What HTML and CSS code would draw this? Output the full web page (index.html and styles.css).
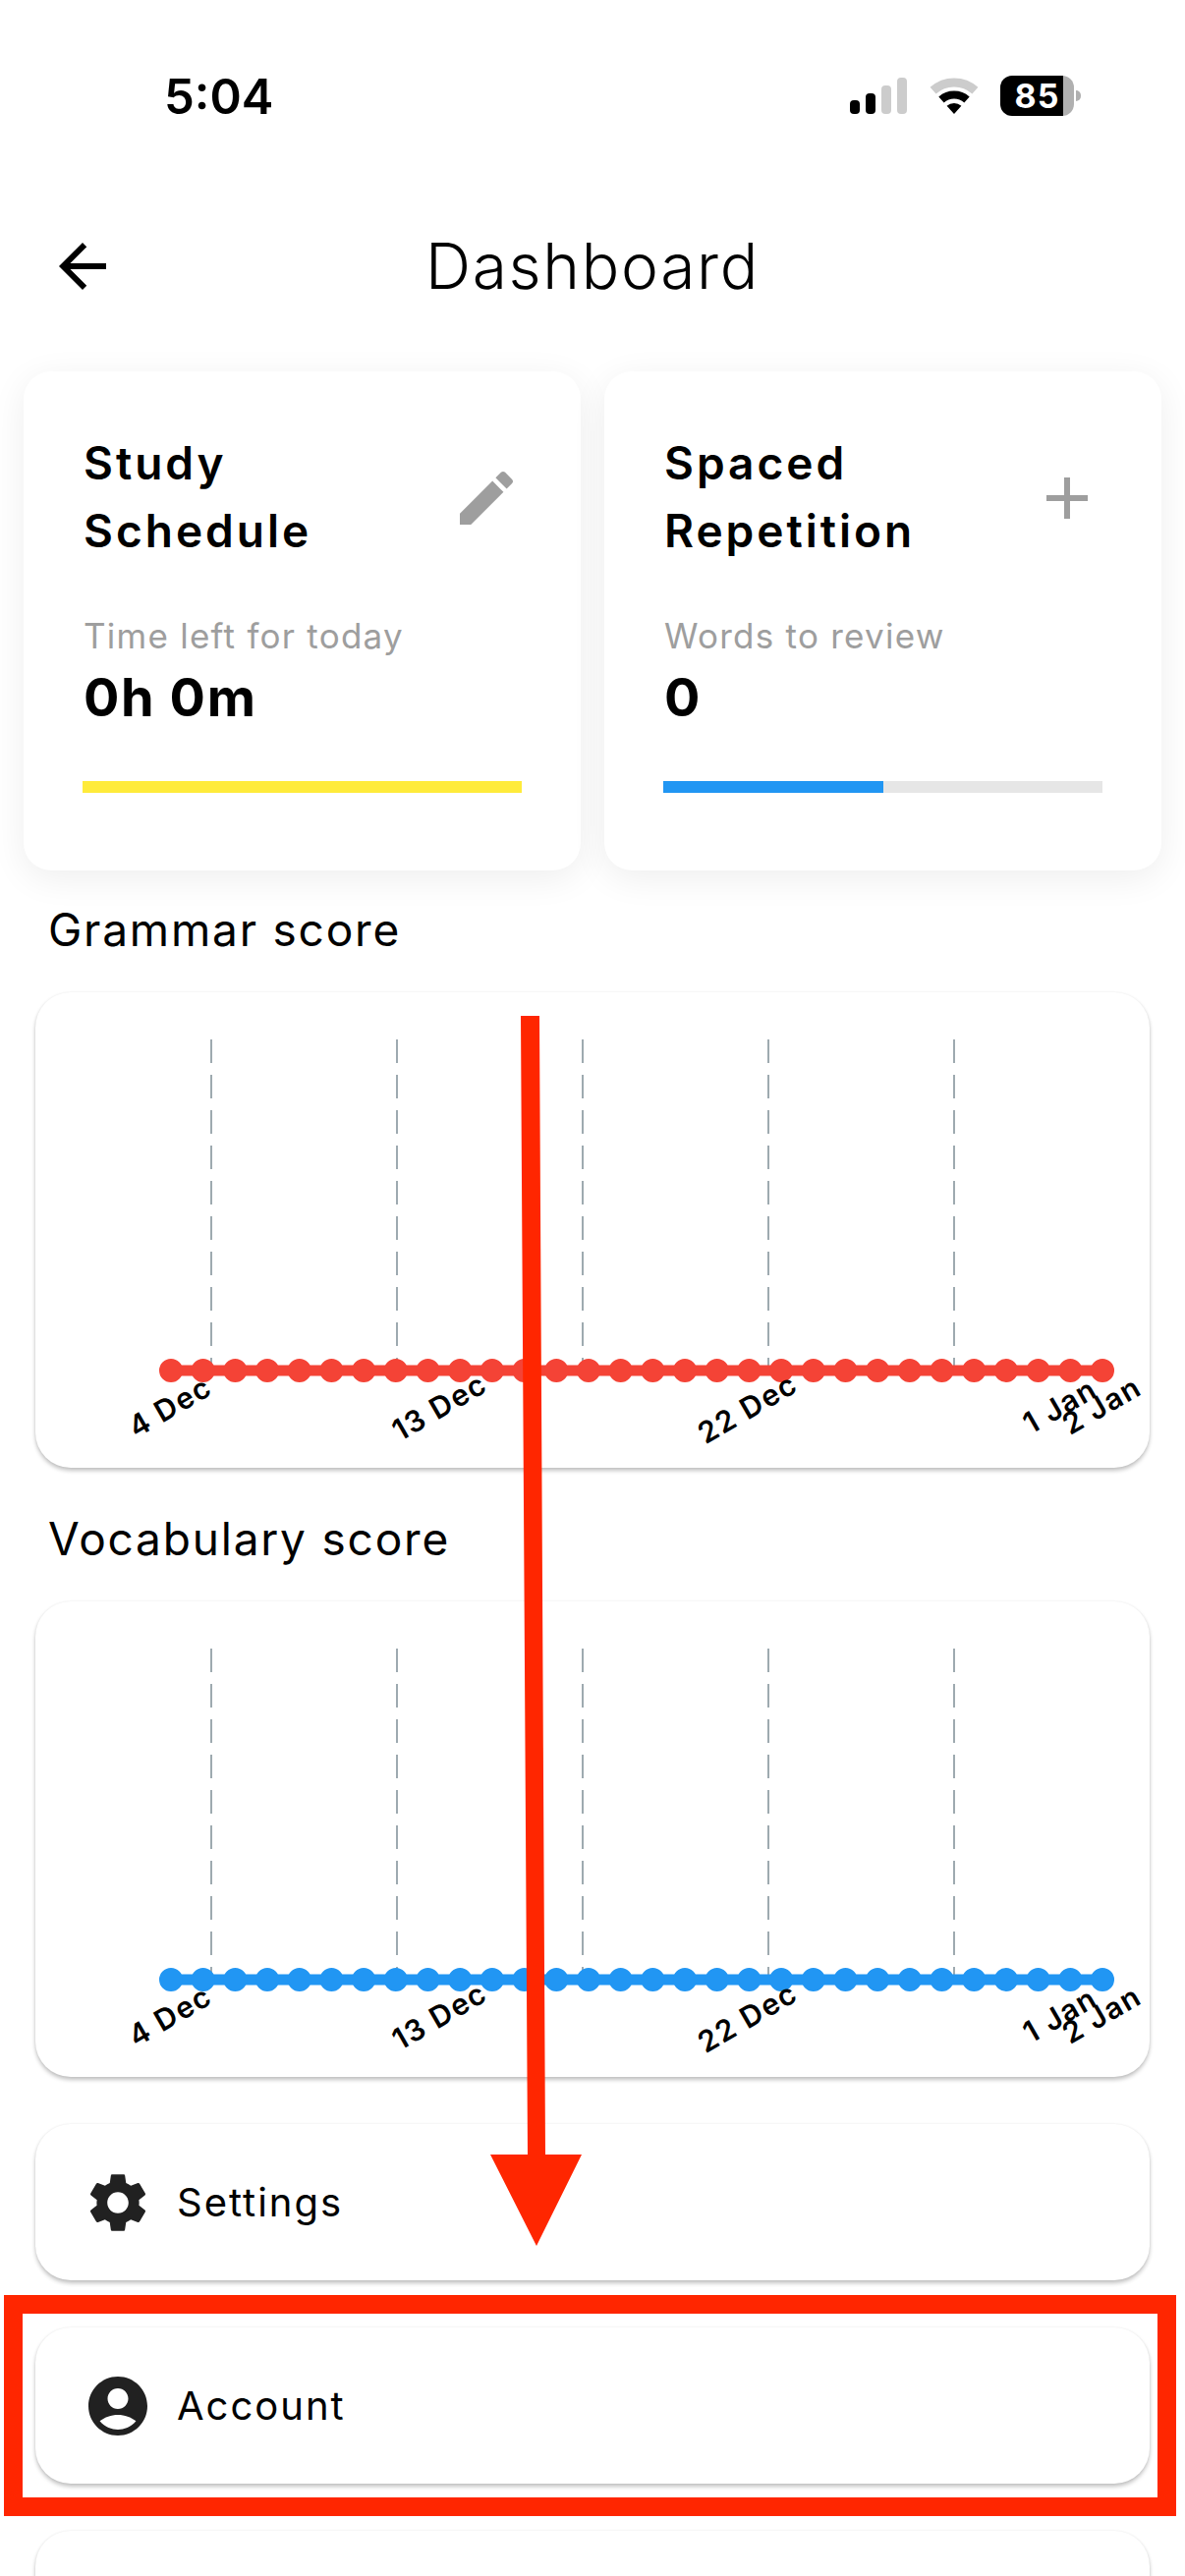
FILE: index.html
```html
<!DOCTYPE html>
<html>
    <head>
        <meta charset="utf-8"/>
        <title>Dashboard</title>
        <link rel="stylesheet" href="styles.css">
    </head>

    <body>
        <div class="status">
            <span class="clock">5:04</span>
            <svg class="signal" width="58" height="37" viewBox="0 0 58 37">
                <rect x="0" y="23" width="10" height="14" rx="4" fill="#000"/>
                <rect x="16" y="16" width="10" height="21" rx="4" fill="#000"/>
                <rect x="32" y="8" width="10" height="29" rx="4" fill="#ccc"/>
                <rect x="48" y="0" width="10" height="37" rx="4" fill="#ccc"/>
            </svg>
            <svg class="wifi" width="50" height="37" viewBox="0 0 50 37">
                <path d="M3.6 13.2A32 32 0 0 1 46.4 13.2" fill="none" stroke="#ccc" stroke-width="9"/>
                <path d="M12 22.5A19.5 19.5 0 0 1 38 22.5" fill="none" stroke="#000" stroke-width="8"/>
                <path d="M25 37L17.6 28.8A11 11 0 0 1 32.4 28.8Z" fill="#000"/>
            </svg>
            <span class="battery">85</span>
            <span class="battery-nub"></span>
        </div>

        <div class="appbar">
            <svg class="icon back" viewBox="0 0 24 24"><path d="M20 11H7.83l5.59-5.59L12 4l-8 8 8 8 1.41-1.41L7.83 13H20v-2z"/></svg>
            <h1 class="page-title">Dashboard</h1>
        </div>

        <div class="summary">
            <div class="summary-card">
                <div class="summary-head">
                    <div class="summary-title">Study<br/>Schedule</div>
                    <svg class="icon summary-icon" viewBox="0 0 24 24"><path d="M3 17.25V21h3.75L17.81 9.94l-3.75-3.75L3 17.25zM20.71 7.04c.39-.39.39-1.02 0-1.41l-2.34-2.34c-.39-.39-1.02-.39-1.41 0l-1.83 1.83 3.75 3.75 1.83-1.83z"/></svg>
                </div>
                <div class="summary-label">Time left for today</div>
                <div class="summary-value">0h 0m</div>
                <div class="progress"><div class="progress-fill yellow" style="width: 100%"></div></div>
            </div>
            <div class="summary-card">
                <div class="summary-head">
                    <div class="summary-title">Spaced<br/>Repetition</div>
                    <svg class="icon summary-icon" viewBox="0 0 24 24"><path d="M19 13h-6v6h-2v-6H5v-2h6V5h2v6h6v2z"/></svg>
                </div>
                <div class="summary-label">Words to review</div>
                <div class="summary-value">0</div>
                <div class="progress"><div class="progress-fill blue" style="width: 50%"></div></div>
            </div>
        </div>

        <h2 class="section-title first">Grammar score</h2>
        <div class="panel chart">
            <svg width="1134" height="484" viewBox="0 0 1134 484">
                <g class="grid">
                    <line x1="179" y1="48" x2="179" y2="385"/>
                    <line x1="368" y1="48" x2="368" y2="385"/>
                    <line x1="557" y1="48" x2="557" y2="385"/>
                    <line x1="746" y1="48" x2="746" y2="385"/>
                    <line x1="935" y1="48" x2="935" y2="385"/>
                </g>
                <line class="series-line red" x1="138" y1="385" x2="1086" y2="385"/>
                <line class="series-dots red" x1="138" y1="385" x2="1086.1" y2="385"/>
                <g class="tick">
                    <text transform="translate(182 408) rotate(-30)">4 Dec</text>
                    <text transform="translate(462 405) rotate(-30)">13 Dec</text>
                    <text transform="translate(778 405) rotate(-30)">22 Dec</text>
                    <text transform="translate(1083 410) rotate(-30)">1 Jan</text>
                    <text transform="translate(1128 408) rotate(-30)">2 Jan</text>
                </g>
            </svg>
        </div>

        <h2 class="section-title">Vocabulary score</h2>
        <div class="panel chart">
            <svg width="1134" height="484" viewBox="0 0 1134 484">
                <g class="grid">
                    <line x1="179" y1="48" x2="179" y2="385"/>
                    <line x1="368" y1="48" x2="368" y2="385"/>
                    <line x1="557" y1="48" x2="557" y2="385"/>
                    <line x1="746" y1="48" x2="746" y2="385"/>
                    <line x1="935" y1="48" x2="935" y2="385"/>
                </g>
                <line class="series-line blue" x1="138" y1="385" x2="1086" y2="385"/>
                <line class="series-dots blue" x1="138" y1="385" x2="1086.1" y2="385"/>
                <g class="tick">
                    <text transform="translate(182 408) rotate(-30)">4 Dec</text>
                    <text transform="translate(462 405) rotate(-30)">13 Dec</text>
                    <text transform="translate(778 405) rotate(-30)">22 Dec</text>
                    <text transform="translate(1083 410) rotate(-30)">1 Jan</text>
                    <text transform="translate(1128 408) rotate(-30)">2 Jan</text>
                </g>
            </svg>
        </div>

        <div class="panel menu-item">
            <svg class="icon menu-icon" viewBox="0 0 24 24"><path d="M19.14 12.94c.04-.3.06-.61.06-.94 0-.32-.02-.64-.07-.94l2.03-1.58c.18-.14.23-.41.12-.61l-1.92-3.32c-.12-.22-.37-.29-.59-.22l-2.39.96c-.5-.38-1.03-.7-1.62-.94l-.36-2.54c-.04-.24-.24-.41-.48-.41h-3.84c-.24 0-.43.17-.47.41l-.36 2.54c-.59.24-1.13.57-1.62.94l-2.39-.96c-.22-.08-.47 0-.59.22L2.74 8.87c-.12.21-.08.47.12.61l2.03 1.58c-.05.3-.09.63-.09.94s.02.64.07.94l-2.03 1.58c-.18.14-.23.41-.12.61l1.92 3.32c.12.22.37.29.59.22l2.39-.96c.5.38 1.03.7 1.62.94l.36 2.54c.05.24.24.41.48.41h3.84c.24 0 .44-.17.47-.41l.36-2.54c.59-.24 1.13-.56 1.62-.94l2.39.96c.22.08.47 0 .59-.22l1.92-3.32c.12-.22.07-.47-.12-.61l-2.01-1.58zM12 15.6c-1.98 0-3.6-1.62-3.6-3.6s1.62-3.6 3.6-3.6 3.6 1.62 3.6 3.6-1.62 3.6-3.6 3.6z"/></svg>
            <span class="menu-label">Settings</span>
        </div>
        <div class="panel menu-item">
            <svg class="icon menu-icon" viewBox="0 0 24 24"><path d="M12 2C6.48 2 2 6.48 2 12s4.48 10 10 10 10-4.48 10-10S17.52 2 12 2zm0 4c1.93 0 3.5 1.57 3.5 3.5S13.93 13 12 13s-3.5-1.57-3.5-3.5S10.07 6 12 6zm0 14c-2.03 0-4.43-.82-6.14-2.88C7.55 15.8 9.68 15 12 15s4.45.8 6.14 2.12C16.43 19.18 14.03 20 12 20z"/></svg>
            <span class="menu-label">Account</span>
        </div>
        <div class="panel menu-item"></div>

        <!-- red marks drawn over the screenshot -->
        <svg class="markup" width="1206" height="2622" viewBox="0 0 1206 2622">
            <rect x="13.5" y="2345.5" width="1174" height="206" fill="none" stroke="#ff2600" stroke-width="19"/>
            <polygon points="530,1034 549,1034 555,2193 592,2193 546,2286 499,2193 537,2193" fill="#ff2600"/>
        </svg>
    </body>
</html>
```

FILE: styles.css
```css
html, body {
  height: 2622px;
  overflow: hidden;
}

body {
  position: relative;
  margin: 0;
  background: #fff;
  color: #000;
  font-family: Inter, "Noto Sans", sans-serif;
}

.icon {
  display: block;
  width: 72px;
  height: 72px;
  flex: none;
}

/* status bar */
.status {
  display: flex;
  align-items: center;
  height: 41px;
  padding: 77px 106px 0 167px;
}

.clock {
  margin-right: auto;
  padding-top: 2px;
  font-size: 49px;
  font-weight: 600;
  line-height: 41px;
}

.wifi {
  margin-left: 23px;
}

.battery {
  width: 75px;
  height: 41px;
  margin-left: 22px;
  border-radius: 12px;
  background: linear-gradient(to right, #000 64px, #b0b0b0 64px);
  color: #fff;
  font-size: 34px;
  font-weight: 700;
  line-height: 41px;
  letter-spacing: 1px;
  text-align: center;
}

.battery-nub {
  width: 5px;
  height: 11px;
  margin-left: 2px;
  border-radius: 0 5px 5px 0;
  background: #b0b0b0;
}

/* app bar */
.appbar {
  display: flex;
  align-items: center;
  height: 72px;
  margin-top: 117px;
  padding-left: 48px;
}

.back {
  fill: #000;
}

.page-title {
  margin: 0 0 0 313px;
  font-size: 64px;
  font-weight: 300;
  line-height: 72px;
  letter-spacing: 1.7px;
}

/* top cards */
.summary {
  display: flex;
  gap: 24px;
  margin-top: 71px;
  padding: 0 24px;
}

.summary-card {
  flex: 1;
  padding: 59px 60px 79px;
  border-radius: 28px;
  background: #fff;
  box-shadow: 0 8px 36px rgba(0, 0, 0, 0.07);
}

.summary-head {
  display: flex;
  justify-content: space-between;
}

.summary-title {
  padding-left: 1px;
  font-size: 46px;
  font-weight: 600;
  line-height: 69px;
  letter-spacing: 3px;
}

.summary-icon {
  margin-top: 34px;
  fill: #9e9e9e;
}

.summary-label {
  margin-top: 51px;
  padding-left: 1px;
  color: #9e9e9e;
  font-size: 35px;
  line-height: 42px;
  letter-spacing: 1.25px;
}

.summary-value {
  margin-top: 10px;
  margin-bottom: -2px;
  padding-left: 1px;
  font-size: 54px;
  font-weight: 700;
  line-height: 64px;
  letter-spacing: 1.6px;
}

.progress {
  height: 12px;
  margin-top: 55px;
  background: #e6e6e6;
}

.progress-fill {
  height: 12px;
}

.progress-fill.yellow {
  background: #ffeb3b;
}

.progress-fill.blue {
  background: #2196f3;
}

/* score charts */
.section-title {
  margin: 40px 0 0 49px;
  font-size: 46px;
  font-weight: 400;
  line-height: 64px;
  letter-spacing: 1.8px;
}

.section-title.first {
  margin-top: 28px;
}

.panel {
  margin: 48px 36px 0;
  border-radius: 36px;
  background: #fff;
  box-shadow: 0 3px 4px rgba(0, 0, 0, 0.24), 0 0 3px rgba(0, 0, 0, 0.06);
}

.chart {
  height: 484px;
  margin-top: 32px;
}

.chart svg {
  display: block;
}

.grid line {
  stroke: #7f8f96;
  stroke-width: 1.5;
  stroke-dasharray: 24 12;
}

.series-line {
  stroke-width: 11;
}

.series-dots {
  stroke-width: 24;
  stroke-linecap: round;
  stroke-dasharray: 0 32.69;
}

.series-line.red,
.series-dots.red {
  stroke: #f44336;
}

.series-line.blue,
.series-dots.blue {
  stroke: #2196f3;
}

.tick text {
  font-size: 30px;
  font-weight: 600;
  letter-spacing: 1.5px;
  text-anchor: end;
  fill: #000;
}

/* menu rows */
.menu-item {
  display: flex;
  align-items: center;
  gap: 24px;
  height: 159px;
  padding-left: 48px;
}

.menu-icon {
  fill: #212121;
}

.menu-label {
  font-size: 40px;
  line-height: 48px;
  letter-spacing: 2px;
}

/* annotation layer */
.markup {
  position: absolute;
  top: 0;
  left: 0;
}
```
